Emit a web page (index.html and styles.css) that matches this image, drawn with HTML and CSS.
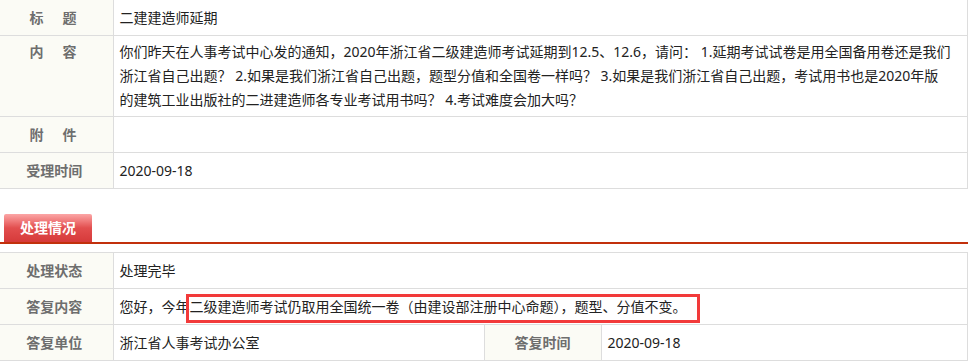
FILE: index.html
```html
<!DOCTYPE html>
<html lang="zh-CN">
<head>
<meta charset="utf-8">
<title>二建建造师延期</title>
<link rel="stylesheet" href="styles.css">
</head>
<body>
<div class="page">
  <table class="info info-top">
    <colgroup><col class="c-label"><col></colgroup>
    <tr>
      <th class="label first"><span class="sp">标　题</span></th>
      <td class="value">二建建造师延期</td>
    </tr>
    <tr>
      <th class="label first top"><span class="sp">内　容</span></th>
      <td class="value">你们昨天在人事考试中心发的通知，2020年浙江省二级建造师考试延期到12.5、12.6，请问： 1.延期考试试卷是用全国备用卷还是我们<br>浙江省自己出题？ 2.如果是我们浙江省自己出题，题型分值和全国卷一样吗？ 3.如果是我们浙江省自己出题，考试用书也是2020年版<br>的建筑工业出版社的二进建造师各专业考试用书吗？ 4.考试难度会加大吗？</td>
    </tr>
    <tr>
      <th class="label first"><span class="sp">附　件</span></th>
      <td class="value"></td>
    </tr>
    <tr>
      <th class="label first">受理时间</th>
      <td class="value">2020-09-18</td>
    </tr>
  </table>

  <div class="section-head">
    <span class="tab">处理情况</span>
  </div>

  <table class="info info-bottom">
    <colgroup><col class="c-label"><col class="c-val"><col class="c-label2"><col></colgroup>
    <tr>
      <th class="label first">处理状态</th>
      <td class="value" colspan="3">处理完毕</td>
    </tr>
    <tr>
      <th class="label first">答复内容</th>
      <td class="value" colspan="3">您好，今年<span class="hl">二级建造师考试仍取用全国统一卷（由建设部注册中心命题），题型、分值不变。</span></td>
    </tr>
    <tr>
      <th class="label first">答复单位</th>
      <td class="value">浙江省人事考试办公室</td>
      <th class="label">答复时间</th>
      <td class="value">2020-09-18</td>
    </tr>
  </table>
</div>
</body>
</html>
```

FILE: styles.css
```css
html, body {
  margin: 0;
  padding: 0;
  background: #ffffff;
}

body {
  font-family: "Noto Sans", "Noto Sans CJK SC", sans-serif;
  font-size: 14px;
  color: #222222;
}

.page {
  width: 968px;
}

.info {
  width: 968px;
  border-collapse: collapse;
  table-layout: fixed;
  border-left: hidden;
}

.info-top {
  border-top: hidden;
}

.c-label { width: 113px; }
.c-val { width: 371px; }
.c-label2 { width: 117px; }

.info th,
.info td {
  border: 1px solid #dddddd;
  padding: 4px 6px;
  height: 27px;
  line-height: 24px;
  vertical-align: middle;
}

.label {
  background: #fbfbf5;
  color: #6e6e6e;
  font-weight: bold;
  text-align: center;
}

.info th.first {
  padding-left: 4px;
  padding-right: 8px;
}

.label.top {
  vertical-align: top;
}

.sp {
  letter-spacing: 2.5px;
}

.value {
  text-align: left;
}

.section-head {
  margin-top: 25px;
  margin-bottom: 8px;
  padding-left: 4px;
  border-bottom: 2px solid #c2300c;
  height: 28px;
}

.tab {
  display: inline-block;
  width: 88px;
  height: 28px;
  line-height: 28px;
  text-align: center;
  color: #ffffff;
  font-weight: bold;
  border-radius: 2px 2px 0 0;
  background: linear-gradient(to bottom, #fba6a6 0%, #f07a7a 25%, #e24e4e 50%, #d63a3a 100%);
}

.hl {
  position: relative;
}

.hl::after {
  content: "";
  position: absolute;
  left: -4px;
  right: -13px;
  top: -3px;
  bottom: -7px;
  border: 3px solid #f23a3a;
  pointer-events: none;
}
```
